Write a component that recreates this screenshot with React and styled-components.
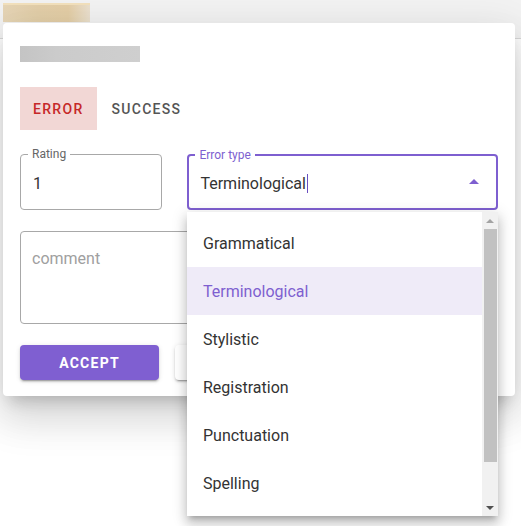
import React from "react";
import styled, { createGlobalStyle } from "styled-components";

const Global = createGlobalStyle`
  html, body { margin: 0; padding: 0; background: #fff; }
  body { font-family: Roboto, "Noto Sans", "Liberation Sans", sans-serif; }
  * { box-sizing: border-box; }
`;

const Page = styled.div`
  position: relative;
  width: 521px;
  height: 526px;
  overflow: hidden;
  background: #fff;
`;

const TopBar = styled.div`
  height: 39px;
  background: #f3f3f3;
  border-bottom: 1px solid #d9d9d9;
  padding: 3px 0 0 3px;
`;

const BlurredChip = styled.div`
  width: 87px;
  height: 19px;
  background: linear-gradient(90deg, #e6d5b6 0%, #e3cfa9 40%, #e4cea6 75%, #ebe1cf 100%);
  border-top: 2px solid #f3e1bd;
`;

const Dialog = styled.div`
  position: absolute;
  left: 3px;
  top: 23px;
  width: 512px;
  height: 373px;
  background: #fff;
  border-radius: 4px;
  box-shadow: 0 11px 15px -7px rgba(0,0,0,0.2), 0 24px 38px 3px rgba(0,0,0,0.10), 0 9px 46px 8px rgba(0,0,0,0.08);
  padding: 23px 17px 16px 17px;
  display: flex;
  flex-direction: column;
`;

const BlurredTitle = styled.div`
  width: 120px;
  height: 17px;
  background: linear-gradient(90deg, #c4c4c4 0%, #cbcbcb 30%, #cfcfcf 100%);
`;

const Tabs = styled.div`
  display: flex;
  margin-top: 25px;
  height: 45px;
`;

const Tab = styled.div`
  display: flex;
  align-items: center;
  justify-content: center;
  padding: 0 ${p => (p.$active ? 13 : 15)}px;
  font-size: 14px;
  font-weight: 500;
  letter-spacing: 1.3px;
  color: ${p => (p.$active ? "#c62828" : "#555")};
  background: ${p => (p.$active ? "#f2d7d5" : "transparent")};
`;

const Row = styled.div`
  display: flex;
  gap: 25px;
  margin-top: ${p => p.$mt}px;
`;

const Field = styled.div`
  position: relative;
  width: ${p => p.$w}px;
  height: ${p => p.$h || 56}px;
  border: ${p => (p.$focused ? "2px solid #7e5fd0" : "1px solid #a8a8a8")};
  border-radius: 4px;
  display: flex;
  align-items: ${p => (p.$top ? "flex-start" : "center")};
  padding: ${p => (p.$top ? "16px 11px" : p.$focused ? "0 11px" : "0 12px")};
  padding-top: ${p => (p.$top ? "17px" : "2px")};
`;

const Label = styled.span`
  position: absolute;
  left: ${p => (p.$focused ? 6 : 7)}px;
  top: -8px;
  padding: 0 4px;
  background: #fff;
  font-size: 12px;
  line-height: 14px;
  color: ${p => (p.$focused ? "#7e5fd0" : "#666")};
`;

const Value = styled.span`
  font-size: 16px;
  color: #333;
  display: flex;
  align-items: center;
`;

const Placeholder = styled.span`
  font-size: 16px;
  color: #a0a0a0;
`;

const Caret = styled.span`
  display: inline-block;
  width: 1px;
  height: 19px;
  margin-left: 1px;
  background: #6a4fc0;
`;

const Arrow = styled.svg`
  position: absolute;
  right: 17px;
  top: 23px;
`;

const Buttons = styled.div`
  display: flex;
  gap: 16px;
  margin-top: 21px;
`;

const Button = styled.div`
  width: ${p => p.$w}px;
  height: 35px;
  border-radius: 4px;
  display: flex;
  align-items: center;
  justify-content: center;
  font-size: 14px;
  font-weight: 700;
  letter-spacing: 1.25px;
  color: ${p => (p.$primary ? "#fff" : "#555")};
  background: ${p => (p.$primary ? "#7f5fd1" : "#fff")};
  box-shadow: 0 3px 1px -2px rgba(0,0,0,0.2), 0 2px 2px 0 rgba(0,0,0,0.14), 0 1px 5px 0 rgba(0,0,0,0.12);
`;

const Menu = styled.div`
  position: absolute;
  left: 187px;
  top: 212px;
  width: 311px;
  height: 304px;
  background: #fff;
  box-shadow: 0 5px 5px -3px rgba(0,0,0,0.2), 0 8px 10px 1px rgba(0,0,0,0.14), 0 3px 14px 2px rgba(0,0,0,0.12);
  display: flex;
`;

const List = styled.ul`
  flex: 1;
  margin: 0;
  padding: 7px 0 9px;
  list-style: none;
`;

const Item = styled.li`
  height: 48px;
  display: flex;
  align-items: center;
  padding-left: 16px;
  font-size: 16px;
  color: ${p => (p.$selected ? "#7e5fd0" : "#333")};
  background: ${p => (p.$selected ? "#efebf8" : "transparent")};
`;

const Scrollbar = styled.div`
  width: 16px;
  background: #f1f1f1;
  display: flex;
  flex-direction: column;
  align-items: center;
`;

const ScrollBtn = styled.div`
  height: 17px;
  display: flex;
  align-items: center;
  justify-content: center;
`;

const Thumb = styled.div`
  width: 13px;
  height: 233px;
  background: #c1c1c1;
`;

const Track = styled.div`
  flex: 1;
`;

const items = ["Grammatical", "Terminological", "Stylistic", "Registration", "Punctuation", "Spelling"];

export default function App() {
  return (
    <Page>
      <Global />
      <TopBar>
        <BlurredChip />
      </TopBar>
      <Dialog>
        <BlurredTitle />
        <Tabs>
          <Tab $active>ERROR</Tab>
          <Tab>SUCCESS</Tab>
        </Tabs>
        <Row $mt={24}>
          <Field $w={143}>
            <Label>Rating</Label>
            <Value>1</Value>
          </Field>
          <Field $w={312} $focused>
            <Label $focused>Error type</Label>
            <Value>Terminological<Caret /></Value>
            <Arrow width="10" height="5" viewBox="0 0 10 5">
              <path d="M0 5 L5 0 L10 5 Z" fill="#7e5fd0" />
            </Arrow>
          </Field>
        </Row>
        <Row $mt={21}>
          <Field $w={479} $h={93} $top>
            <Placeholder>comment</Placeholder>
          </Field>
        </Row>
        <Buttons>
          <Button $primary $w={139}>ACCEPT</Button>
          <Button $w={139}>CANCEL</Button>
        </Buttons>
      </Dialog>
      <Menu>
        <List>
          {items.map(it => (
            <Item key={it} $selected={it === "Terminological"}>{it}</Item>
          ))}
        </List>
        <Scrollbar>
          <ScrollBtn>
            <svg width="8" height="4" viewBox="0 0 8 4"><path d="M0 4 L4 0 L8 4 Z" fill="#a3a3a3" /></svg>
          </ScrollBtn>
          <Thumb />
          <Track />
          <ScrollBtn>
            <svg width="8" height="4" viewBox="0 0 8 4"><path d="M0 0 L4 4 L8 0 Z" fill="#505050" /></svg>
          </ScrollBtn>
        </Scrollbar>
      </Menu>
    </Page>
  );
}
